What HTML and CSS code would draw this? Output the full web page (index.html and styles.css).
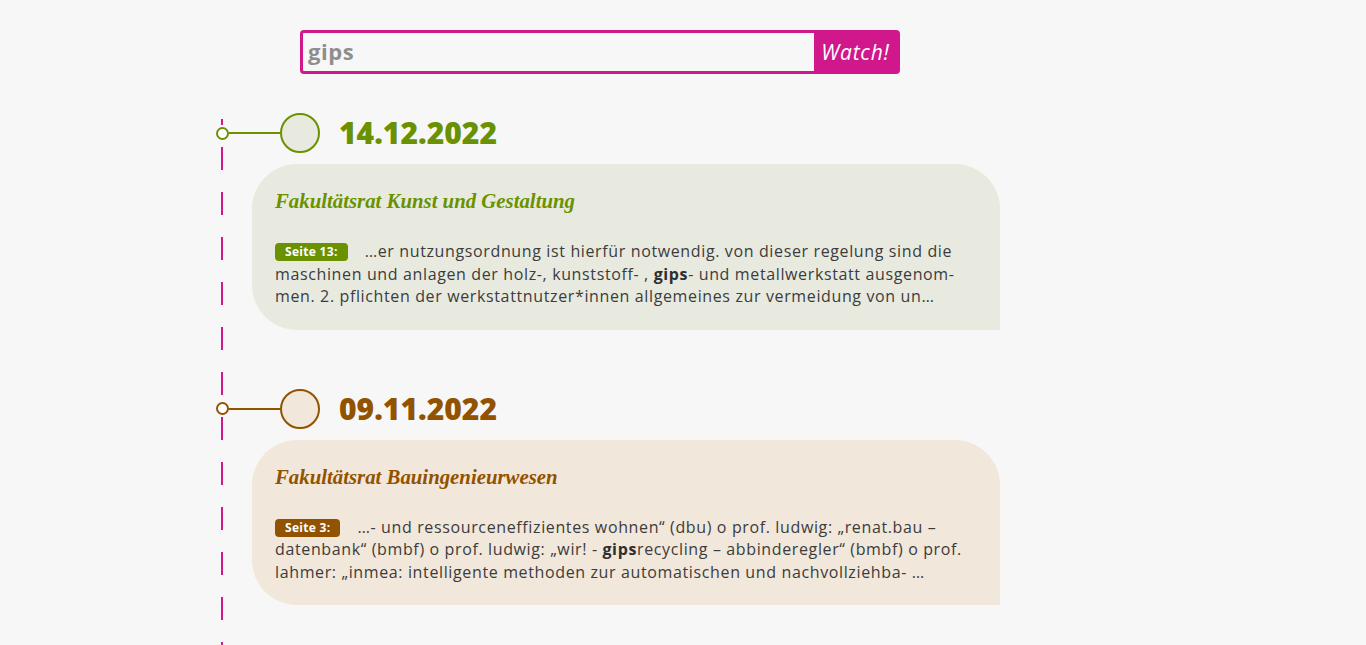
FILE: index.html
```html
<!DOCTYPE html>
<html lang="de">
<head>
<meta charset="utf-8">
<title>Watch</title>
<link rel="stylesheet" href="styles.css">
</head>
<body>
<div class="page">
  <form class="search">
    <div class="search-input">gips</div>
    <div class="search-btn">Watch!</div>
  </form>
  <div class="timeline">
    <section class="entry green">
      <div class="entry-head">
        <span class="dot"></span><span class="connector"></span><span class="bubble"></span>
        <h2 class="date">14.12.2022</h2>
      </div>
      <div class="card">
        <h3 class="card-title">Fakultätsrat Kunst und Gestaltung</h3>
        <p class="card-text"><span class="badge">Seite 13:</span>…er nutzungsordnung ist hierfür notwendig. von dieser regelung sind die<br>maschinen und anlagen der holz-, kunststoff- , <b>gips</b>- und metallwerkstatt ausgenom-<br>men. 2. pflichten der werkstattnutzer*innen allgemeines zur vermeidung von un…</p>
      </div>
    </section>
    <section class="entry brown">
      <div class="entry-head">
        <span class="dot"></span><span class="connector"></span><span class="bubble"></span>
        <h2 class="date">09.11.2022</h2>
      </div>
      <div class="card">
        <h3 class="card-title">Fakultätsrat Bauingenieurwesen</h3>
        <p class="card-text"><span class="badge">Seite 3:</span>…- und ressourceneffizientes wohnen“ (dbu) o prof. ludwig: „renat.bau –<br>datenbank“ (bmbf) o prof. ludwig: „wir! - <b>gips</b>recycling – abbinderegler“ (bmbf) o prof.<br>lahmer: „inmea: intelligente methoden zur automatischen und nachvollziehba- …</p>
      </div>
    </section>
  </div>
</div>
</body>
</html>
```
FILE: styles.css
```css
html, body {
  margin: 0;
  padding: 0;
  background: #f7f7f7;
}
body {
  font-family: "Open Sans", "DejaVu Sans", sans-serif;
  color: #3c3c3c;
  height: 645px;
  overflow: hidden;
}
.page {
  padding-top: 30px;
}
.search {
  margin: 0 0 0 300px;
  width: 600px;
  height: 44px;
  box-sizing: border-box;
  border: 3px solid #d0178b;
  border-radius: 4px;
  display: flex;
  background: #f7f7f7;
}
.search-input {
  flex: 1;
  padding-left: 5px;
  font-weight: 700;
  font-size: 22px;
  letter-spacing: 0.6px;
  color: #8e8e8e;
  line-height: 37px;
}
.search-btn {
  width: 83px;
  background: #d0178b;
  color: #fff;
  font-style: italic;
  font-size: 21px;
  letter-spacing: 0.8px;
  line-height: 38px;
  text-align: center;
}
.timeline {
  position: relative;
  margin: 39px 0 0 215px;
}
.timeline::before {
  content: "";
  position: absolute;
  left: 6px;
  top: 6px;
  bottom: -200px;
  width: 2px;
  background-image: linear-gradient(to bottom, #d0178b 0 23px, transparent 23px 45px);
  background-size: 2px 45px;
  background-repeat: repeat-y;
  background-position: 0 -17px;
}
.entry {
  margin-bottom: 59px;
}
.entry-head {
  display: flex;
  align-items: center;
  height: 40px;
}
.dot {
  width: 13px;
  height: 13px;
  box-sizing: border-box;
  border-radius: 50%;
  border: 2px solid var(--c);
  background: #fff;
  margin-left: 1px;
}
.connector {
  width: 51px;
  height: 2px;
  background: var(--c);
}
.bubble {
  width: 40px;
  height: 40px;
  box-sizing: border-box;
  border-radius: 50%;
  border: 2px solid var(--c);
  background: var(--bg);
}
.date {
  margin: 0 0 0 19px;
  font-size: 30px;
  font-weight: 800;
  color: var(--c);
  line-height: 40px;
}
.card {
  margin: 11px 0 0 37px;
  width: 748px;
  box-sizing: border-box;
  background: var(--bg);
  border-radius: 45px 45px 0 45px;
  padding: 24px 20px 22px 23px;
}
.card-title {
  margin: 0;
  font-family: "Liberation Serif", "DejaVu Serif", serif;
  font-style: italic;
  font-weight: 700;
  font-size: 20.8px;
  line-height: 26px;
  color: var(--c);
}
.card-text {
  margin: 26px 0 0;
  font-size: 16px;
  letter-spacing: 0.63px;
  line-height: 22.5px;
  color: #3c3c3c;
  white-space: nowrap;
}
.card-text b {
  font-weight: 700;
  color: #2e2e2e;
}
.badge {
  display: inline-block;
  background: var(--c);
  color: #fff;
  font-size: 12px;
  font-weight: 700;
  letter-spacing: 0.3px;
  line-height: 18px;
  padding: 0 10px;
  border-radius: 4px;
  margin-right: 17px;
  vertical-align: 1px;
}
.green {
  --c: #6a9200;
  --bg: #e8eadf;
}
.brown {
  --c: #925300;
  --bg: #f1e7da;
}
```
